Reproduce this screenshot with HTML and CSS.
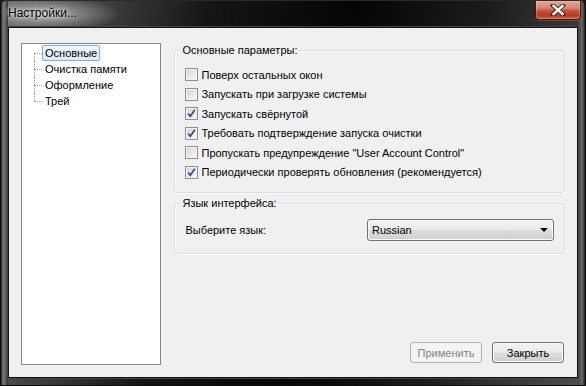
FILE: index.html
```html
<!DOCTYPE html>
<html lang="ru">
<head>
<meta charset="utf-8">
<title>Настройки...</title>
<link rel="stylesheet" href="styles.css">
</head>
<body>
<div class="window">
  <div class="titlebar">
    <span class="title">Настройки...</span>
    <span class="close">
      <svg width="16" height="12" viewBox="0 0 16 12">
        <path d="M3 1.5 L13 10.5 M13 1.5 L3 10.5" stroke="#3a2320" stroke-width="4.2" stroke-linecap="square"/>
        <path d="M3.5 2 L12.5 10 M12.5 2 L3.5 10" stroke="#ffffff" stroke-width="2.4" stroke-linecap="square"/>
      </svg>
    </span>
  </div>
  <div class="client">
    <div class="tree">
      <ul class="tree-list">
        <li class="tree-item first"><span class="tree-label selected">Основные</span></li>
        <li class="tree-item"><span class="tree-label">Очистка памяти</span></li>
        <li class="tree-item"><span class="tree-label">Оформление</span></li>
        <li class="tree-item last"><span class="tree-label">Трей</span></li>
      </ul>
    </div>
    <div class="main">
      <div class="group group-general">
        <div class="legend">Основные параметры:</div>
        <div class="rows">
          <div class="row"><span class="cb"></span><span>Поверх остальных окон</span></div>
          <div class="row"><span class="cb"></span><span>Запускать при загрузке системы</span></div>
          <div class="row"><span class="cb"><svg class="tick" width="11" height="11" viewBox="0 0 11 11"><path d="M2.2 5.4 L4.3 8.2 L8.8 1.8" fill="none" stroke="#2d4f8e" stroke-width="1.7"/></svg></span><span>Запускать свёрнутой</span></div>
          <div class="row"><span class="cb"><svg class="tick" width="11" height="11" viewBox="0 0 11 11"><path d="M2.2 5.4 L4.3 8.2 L8.8 1.8" fill="none" stroke="#2d4f8e" stroke-width="1.7"/></svg></span><span>Требовать подтверждение запуска очистки</span></div>
          <div class="row"><span class="cb"></span><span>Пропускать предупреждение "User Account Control"</span></div>
          <div class="row"><span class="cb"><svg class="tick" width="11" height="11" viewBox="0 0 11 11"><path d="M2.2 5.4 L4.3 8.2 L8.8 1.8" fill="none" stroke="#2d4f8e" stroke-width="1.7"/></svg></span><span>Периодически проверять обновления (рекомендуется)</span></div>
        </div>
      </div>
      <div class="group group-lang">
        <div class="legend">Язык интерфейса:</div>
        <div class="lang-row">
          <span class="lang-label">Выберите язык:</span>
          <span class="combo"><span>Russian</span><span class="arrow"></span></span>
        </div>
      </div>
      <div class="buttons">
        <span class="btn disabled">Применить</span>
        <span class="btn">Закрыть</span>
      </div>
    </div>
  </div>
</div>
</body>
</html>
```
FILE: styles.css
```css
html, body {
  margin: 0;
  padding: 0;
  background: #1a1a1a;
}
.window {
  width: 586px;
  height: 386px;
  box-sizing: border-box;
  padding: 0 7px 7px 7px;
  display: flex;
  flex-direction: column;
  border-radius: 6px 6px 0 0;
  border: 1px solid #0c0c0c;
  border-top-color: #2a2a2a;
  background:
    linear-gradient(90deg, #1e1e1e 0px, #7a7a7a 2px, #5c5c5c 5px, #2a2a2a 7px, transparent 7px, transparent calc(100% - 7px), #3c3c3c calc(100% - 7px), #6a6a6a calc(100% - 3px), #1e1e1e 100%),
    radial-gradient(ellipse 75px 17px at 45px 13px, rgba(180,180,180,0.9), rgba(120,120,120,0) 100%),
    linear-gradient(100deg, #6a6a6a 0%, #444 14%, #151515 32%, #050505 55%, #1c1c1c 75%, #505050 100%);
  font-family: "Liberation Sans", Arial, sans-serif;
  font-size: 11px;
  color: #000;
}
.titlebar {
  height: 26px;
  display: flex;
  align-items: flex-start;
  justify-content: space-between;
}
.title {
  margin-top: 5px;
  font-family: "Liberation Sans", Arial, sans-serif;
  font-size: 12px;
  color: #000;
  text-shadow: 0 0 6px rgba(255,255,255,0.9), 0 0 3px rgba(255,255,255,0.8);
}
.close {
  width: 46px;
  height: 19px;
  margin-right: -3px;
  box-sizing: border-box;
  border: 1px solid #3a1a14;
  border-top: none;
  border-radius: 0 0 4px 4px;
  background: linear-gradient(180deg, #e9a795 0%, #d88371 40%, #c54f37 55%, #b73b22 80%, #d0603f 100%);
  box-shadow: inset 0 0 0 1px rgba(255,200,190,0.35), 0 1px 0 rgba(255,255,255,0.15);
  display: flex;
  align-items: center;
  justify-content: center;
}
.client {
  flex: 1;
  display: flex;
  background: #f0f0f0;
  border: 1px solid #111;
  box-shadow: 0 0 0 1px #444;
}
.tree {
  width: 141px;
  height: 322px;
  box-sizing: border-box;
  margin: 15px 0 0 12px;
  background: #fff;
  border: 1px solid #828790;
  padding: 1px 0 0 0;
}
.tree-list {
  list-style: none;
  margin: 0;
  padding: 0 0 0 12px;
}
.tree-item {
  position: relative;
  height: 16px;
  display: flex;
  align-items: center;
  padding-left: 8px;
}
.tree-item::before {
  content: "";
  position: absolute;
  left: 0;
  top: 8px;
  width: 8px;
  border-top: 1px dotted #a0a0a0;
}
.tree-item::after {
  content: "";
  position: absolute;
  left: 0;
  top: 0;
  height: 16px;
  border-left: 1px dotted #a0a0a0;
}
.tree-item.first::after {
  top: 8px;
  height: 8px;
}
.tree-item.last::after {
  height: 8px;
}
.tree-label {
  padding: 1px 2px;
  border: 1px solid transparent;
  line-height: 12px;
}
.tree-label.selected {
  background: linear-gradient(180deg, #eef6fd 0%, #dcecfc 100%);
  border-color: #84acdd;
  border-radius: 2px;
}
.main {
  width: 392px;
  margin: 0 12px 0 13px;
  display: flex;
  flex-direction: column;
}
.group {
  box-sizing: border-box;
  border: 1px solid #d5dfe5;
  border-radius: 3px;
  padding: 0 10px;
  box-shadow: inset 1px 1px 0 #fff, 1px 1px 0 #fff;
}
.group-general {
  margin-top: 22px;
  height: 143px;
}
.group-lang {
  margin-top: 10px;
  height: 51px;
}
.legend {
  width: fit-content;
  margin: -7px 0 0 -5px;
  padding: 0 2px;
  line-height: 13px;
  background: #f0f0f0;
}
.rows {
  margin-top: 8px;
}
.row {
  height: 19.5px;
  display: flex;
  align-items: center;
  gap: 3px;
}
.cb {
  width: 13px;
  height: 13px;
  box-sizing: border-box;
  border: 1px solid #8e8f8f;
  background: linear-gradient(135deg, #cfd2d6 0%, #e6e7e9 50%, #f8f8f8 100%);
  box-shadow: inset 0 0 0 1px #f4f4f4;
  display: flex;
  align-items: center;
  justify-content: center;
  flex: none;
}
.tick {
  display: block;
}
.lang-row {
  margin-top: 9px;
  display: flex;
  align-items: center;
  justify-content: space-between;
}
.combo {
  width: 187px;
  height: 22px;
  box-sizing: border-box;
  border: 1px solid #707070;
  border-radius: 3px;
  background: linear-gradient(180deg, #f2f2f2 0%, #ebebeb 48%, #dddddd 52%, #cfcfcf 100%);
  box-shadow: inset 0 0 0 1px #fcfcfc;
  display: flex;
  align-items: center;
  justify-content: space-between;
  padding: 0 5px 0 4px;
}
.arrow {
  width: 0;
  height: 0;
  border-left: 4px solid transparent;
  border-right: 4px solid transparent;
  border-top: 4px solid #000;
}
.buttons {
  margin-top: auto;
  margin-bottom: 14px;
  margin-right: 1px;
  display: flex;
  justify-content: flex-end;
  gap: 10px;
}
.btn {
  width: 72px;
  height: 21px;
  box-sizing: border-box;
  border: 1px solid #707070;
  border-radius: 3px;
  background: linear-gradient(180deg, #f2f2f2 0%, #ebebeb 48%, #dddddd 52%, #cfcfcf 100%);
  box-shadow: inset 0 0 0 1px #fcfcfc;
  display: flex;
  align-items: center;
  justify-content: center;
}
.btn.disabled {
  border-color: #adb2b5;
  background: #f4f4f4;
  box-shadow: none;
  color: #838383;
}
```
